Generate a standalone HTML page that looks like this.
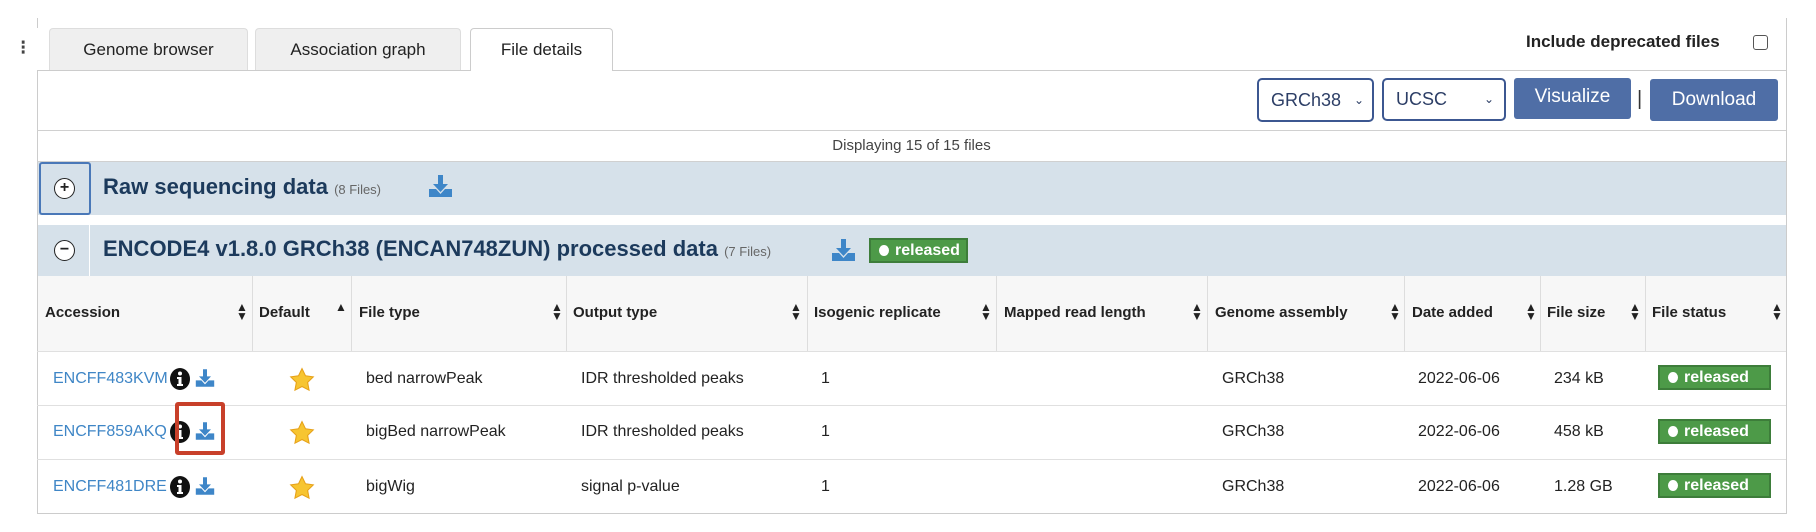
<!DOCTYPE html>
<html><head><meta charset="utf-8"><style>
*{margin:0;padding:0;box-sizing:border-box}
body{width:1816px;height:532px;background:#fff;position:relative;overflow:hidden;font-family:"Liberation Sans",sans-serif;color:#222}
.a{position:absolute;white-space:nowrap}
.tab{position:absolute;top:28px;height:42px;background:#efefef;border:1px solid #ddd;border-bottom:none;border-radius:4px 4px 0 0;font-size:17px;line-height:42px;text-align:center;color:#222}
.hl{position:absolute;height:1px;background:#d0d0d0}
.vl{position:absolute;width:1px;background:#ddd}
.hdr{position:absolute;left:38px;width:1748px;background:#d6e1ea}
.btn{position:absolute;background:#4f6ea6;color:#fff;font-size:19px;text-align:center;border-radius:3px}
.sel{position:absolute;border:2px solid #3c5791;border-radius:5px;font-size:18px;color:#2c3e66;background:#fff}
.th{position:absolute;top:304px;font-size:15px;font-weight:bold;color:#222}
.td{position:absolute;font-size:16px;color:#222}
.so{position:absolute;top:303px;font-size:12px;line-height:9px;color:#222}
.badge{position:absolute;background:#4d9a48;border:2px solid #3d7d3a;color:#fff;font-size:16px;font-weight:bold;height:25px;line-height:21px;padding-left:24px}
.badge:before{content:"";position:absolute;left:8px;top:5px;width:10px;height:11px;border-radius:50%;background:#fff}
.link{color:#3f86c6}
</style></head><body>
<div class="a" style="left:20px;top:35px;font-size:20px;font-weight:bold;color:#444">⁝</div>
<div class="vl" style="left:37px;top:18px;height:10px;background:#ccc"></div>
<div class="tab" style="left:49px;width:199px">Genome browser</div>
<div class="tab" style="left:255px;width:206px">Association graph</div>
<div class="tab" style="left:470px;width:143px;background:#fff;border-color:#ccc;height:43px">File details</div>
<div class="a" style="left:1526px;top:32px;font-size:17px;font-weight:bold">Include deprecated files</div>
<div class="a" style="left:1753px;top:35px;width:15px;height:15px;border:1.5px solid #555;border-radius:3px"></div>
<div class="hl" style="left:37px;top:70px;width:433px;background:#ccc"></div>
<div class="hl" style="left:613px;top:70px;width:1173px;background:#ccc"></div>
<div class="vl" style="left:37px;top:70px;height:444px;background:#ccc"></div>
<div class="vl" style="left:1786px;top:18px;height:496px;background:#ccc"></div>
<div class="sel" style="left:1257px;top:78px;width:117px;height:44px;line-height:40px;padding-left:12px">GRCh38 <span style="font-size:12px;position:absolute;right:8px">⌄</span></div>
<div class="sel" style="left:1382px;top:78px;width:124px;height:43px;line-height:39px;padding-left:12px">UCSC<span style="font-size:12px;position:absolute;right:10px">⌄</span></div>
<div class="btn" style="left:1514px;top:78px;width:117px;height:41px;line-height:38px">Visualize</div>
<div class="a" style="left:1637px;top:88px;font-size:20px;color:#333">|</div>
<div class="btn" style="left:1650px;top:79px;width:128px;height:42px;line-height:42px">Download</div>
<div class="hl" style="left:37px;top:130px;width:1749px"></div>
<div class="a" style="left:37px;width:1749px;top:137px;font-size:15px;text-align:center;color:#444">Displaying 15 of 15 files</div>
<div class="hl" style="left:37px;top:161px;width:1749px"></div>
<div class="hdr" style="top:162px;height:53px"></div>
<div class="a" style="left:39px;top:162px;width:52px;height:53px;border:2px solid #4a78b8;border-radius:3px;background:#d6e1ea"></div>
<div class="a" style="left:54px;top:178px;width:21px;height:21px;border:1.5px solid #222;border-radius:50%;background:#fff;font-size:16px;font-weight:bold;text-align:center;line-height:18px">+</div>
<div class="a" style="left:103px;top:174px;font-size:22px;font-weight:bold;color:#1c3a5c">Raw sequencing data <span style="font-size:13px;color:#666;font-weight:normal">(8 Files)</span></div>
<svg class="a" style="left:428px;top:174px" width="25" height="24" viewBox="0 0 25 24"><path d="M10 1h5v9h5l-7.5 8L5 10h5z" fill="#3e86c8"/><path d="M1 15h7l4.5 5 4.5-5h7v8H1z" fill="#3e86c8"/></svg>
<div class="hdr" style="top:225px;height:51px"></div>
<div class="vl" style="left:89px;top:225px;height:51px;background:#fff"></div>
<div class="a" style="left:54px;top:240px;width:21px;height:21px;border:1.5px solid #222;border-radius:50%;background:#fff;font-size:16px;font-weight:bold;text-align:center;line-height:17px">−</div>
<div class="a" style="left:103px;top:236px;font-size:22px;font-weight:bold;color:#1c3a5c">ENCODE4 v1.8.0 GRCh38 (ENCAN748ZUN) processed data <span style="font-size:13px;color:#666;font-weight:normal">(7 Files)</span></div>
<svg class="a" style="left:831px;top:238px" width="25" height="24" viewBox="0 0 25 24"><path d="M10 1h5v9h5l-7.5 8L5 10h5z" fill="#3e86c8"/><path d="M1 15h7l4.5 5 4.5-5h7v8H1z" fill="#3e86c8"/></svg>
<div class="badge" style="left:869px;top:238px;width:99px">released</div>
<div class="a" style="left:38px;top:276px;width:1748px;height:75px;background:#f7f7f7"></div>
<div class="th" style="left:45px">Accession</div><div class="so" style="left:236px">▲<br>▼</div>
<div class="th" style="left:259px">Default</div><div class="so" style="left:335px">▲</div>
<div class="th" style="left:359px">File type</div><div class="so" style="left:551px">▲<br>▼</div>
<div class="th" style="left:573px">Output type</div><div class="so" style="left:790px">▲<br>▼</div>
<div class="th" style="left:814px">Isogenic replicate</div><div class="so" style="left:980px">▲<br>▼</div>
<div class="th" style="left:1004px">Mapped read length</div><div class="so" style="left:1191px">▲<br>▼</div>
<div class="th" style="left:1215px">Genome assembly</div><div class="so" style="left:1389px">▲<br>▼</div>
<div class="th" style="left:1412px">Date added</div><div class="so" style="left:1525px">▲<br>▼</div>
<div class="th" style="left:1547px">File size</div><div class="so" style="left:1629px">▲<br>▼</div>
<div class="th" style="left:1652px">File status</div><div class="so" style="left:1771px">▲<br>▼</div>
<div class="vl" style="left:252px;top:276px;height:75px"></div>
<div class="vl" style="left:351px;top:276px;height:75px"></div>
<div class="vl" style="left:566px;top:276px;height:75px"></div>
<div class="vl" style="left:807px;top:276px;height:75px"></div>
<div class="vl" style="left:996px;top:276px;height:75px"></div>
<div class="vl" style="left:1207px;top:276px;height:75px"></div>
<div class="vl" style="left:1404px;top:276px;height:75px"></div>
<div class="vl" style="left:1540px;top:276px;height:75px"></div>
<div class="vl" style="left:1645px;top:276px;height:75px"></div>
<div class="hl" style="left:37px;top:351px;width:1749px;background:#e0e0e0"></div>
<div class="hl" style="left:37px;top:405px;width:1749px;background:#e0e0e0"></div>
<div class="hl" style="left:37px;top:459px;width:1749px;background:#e0e0e0"></div>
<div class="hl" style="left:37px;top:513px;width:1749px;background:#ccc"></div>

<div class="td link" style="left:53px;top:370px">ENCFF483KVM</div>
<div class="td link" style="left:53px;top:423px">ENCFF859AKQ</div>
<div class="td link" style="left:53px;top:478px">ENCFF481DRE</div>
<svg class="a" style="left:170px;top:368px" width="20" height="22" viewBox="0 0 20 22"><ellipse cx="10" cy="11" rx="10" ry="11" fill="#111"/><circle cx="10" cy="5.5" r="2" fill="#fff"/><path d="M7 9h4.5v7h1.5v2H7v-2h1.5v-5H7z" fill="#fff"/></svg>
<svg class="a" style="left:170px;top:421px" width="20" height="22" viewBox="0 0 20 22"><ellipse cx="10" cy="11" rx="10" ry="11" fill="#111"/><circle cx="10" cy="5.5" r="2" fill="#fff"/><path d="M7 9h4.5v7h1.5v2H7v-2h1.5v-5H7z" fill="#fff"/></svg>
<svg class="a" style="left:170px;top:476px" width="20" height="22" viewBox="0 0 20 22"><ellipse cx="10" cy="11" rx="10" ry="11" fill="#111"/><circle cx="10" cy="5.5" r="2" fill="#fff"/><path d="M7 9h4.5v7h1.5v2H7v-2h1.5v-5H7z" fill="#fff"/></svg>
<svg class="a" style="left:195px;top:368px" width="20" height="20" viewBox="0 0 25 24"><path d="M10 1h5v9h5l-7.5 8L5 10h5z" fill="#3e86c8"/><path d="M1 15h7l4.5 5 4.5-5h7v8H1z" fill="#3e86c8"/></svg>
<svg class="a" style="left:195px;top:421px" width="20" height="20" viewBox="0 0 25 24"><path d="M10 1h5v9h5l-7.5 8L5 10h5z" fill="#3e86c8"/><path d="M1 15h7l4.5 5 4.5-5h7v8H1z" fill="#3e86c8"/></svg>
<svg class="a" style="left:195px;top:476px" width="20" height="20" viewBox="0 0 25 24"><path d="M10 1h5v9h5l-7.5 8L5 10h5z" fill="#3e86c8"/><path d="M1 15h7l4.5 5 4.5-5h7v8H1z" fill="#3e86c8"/></svg>
<div class="a" style="left:175px;top:402px;width:50px;height:53px;border:4px solid #c8402a;border-radius:3px"></div>
<svg class="a" style="left:289px;top:367px" width="26" height="26" viewBox="0 0 24 24"><path d="M12 1.5l3.2 6.6 7.2 1-5.2 5.1 1.3 7.2L12 18l-6.5 3.4 1.3-7.2L1.6 9.1l7.2-1z" fill="#f7c531" stroke="#e7a21a" stroke-width="1"/></svg>
<svg class="a" style="left:289px;top:420px" width="26" height="26" viewBox="0 0 24 24"><path d="M12 1.5l3.2 6.6 7.2 1-5.2 5.1 1.3 7.2L12 18l-6.5 3.4 1.3-7.2L1.6 9.1l7.2-1z" fill="#f7c531" stroke="#e7a21a" stroke-width="1"/></svg>
<svg class="a" style="left:289px;top:475px" width="26" height="26" viewBox="0 0 24 24"><path d="M12 1.5l3.2 6.6 7.2 1-5.2 5.1 1.3 7.2L12 18l-6.5 3.4 1.3-7.2L1.6 9.1l7.2-1z" fill="#f7c531" stroke="#e7a21a" stroke-width="1"/></svg>
<div class="td" style="left:366px;top:370px">bed narrowPeak</div>
<div class="td" style="left:366px;top:423px">bigBed narrowPeak</div>
<div class="td" style="left:366px;top:478px">bigWig</div>
<div class="td" style="left:581px;top:370px">IDR thresholded peaks</div>
<div class="td" style="left:581px;top:423px">IDR thresholded peaks</div>
<div class="td" style="left:581px;top:478px">signal p-value</div>
<div class="td" style="left:821px;top:370px">1</div>
<div class="td" style="left:821px;top:423px">1</div>
<div class="td" style="left:821px;top:478px">1</div>
<div class="td" style="left:1222px;top:370px">GRCh38</div>
<div class="td" style="left:1222px;top:423px">GRCh38</div>
<div class="td" style="left:1222px;top:478px">GRCh38</div>
<div class="td" style="left:1418px;top:370px">2022-06-06</div>
<div class="td" style="left:1418px;top:423px">2022-06-06</div>
<div class="td" style="left:1418px;top:478px">2022-06-06</div>
<div class="td" style="left:1554px;top:370px">234 kB</div>
<div class="td" style="left:1554px;top:423px">458 kB</div>
<div class="td" style="left:1554px;top:478px">1.28 GB</div>
<div class="badge" style="left:1658px;top:365px;width:113px">released</div>
<div class="badge" style="left:1658px;top:419px;width:113px">released</div>
<div class="badge" style="left:1658px;top:473px;width:113px">released</div>
</body></html>
